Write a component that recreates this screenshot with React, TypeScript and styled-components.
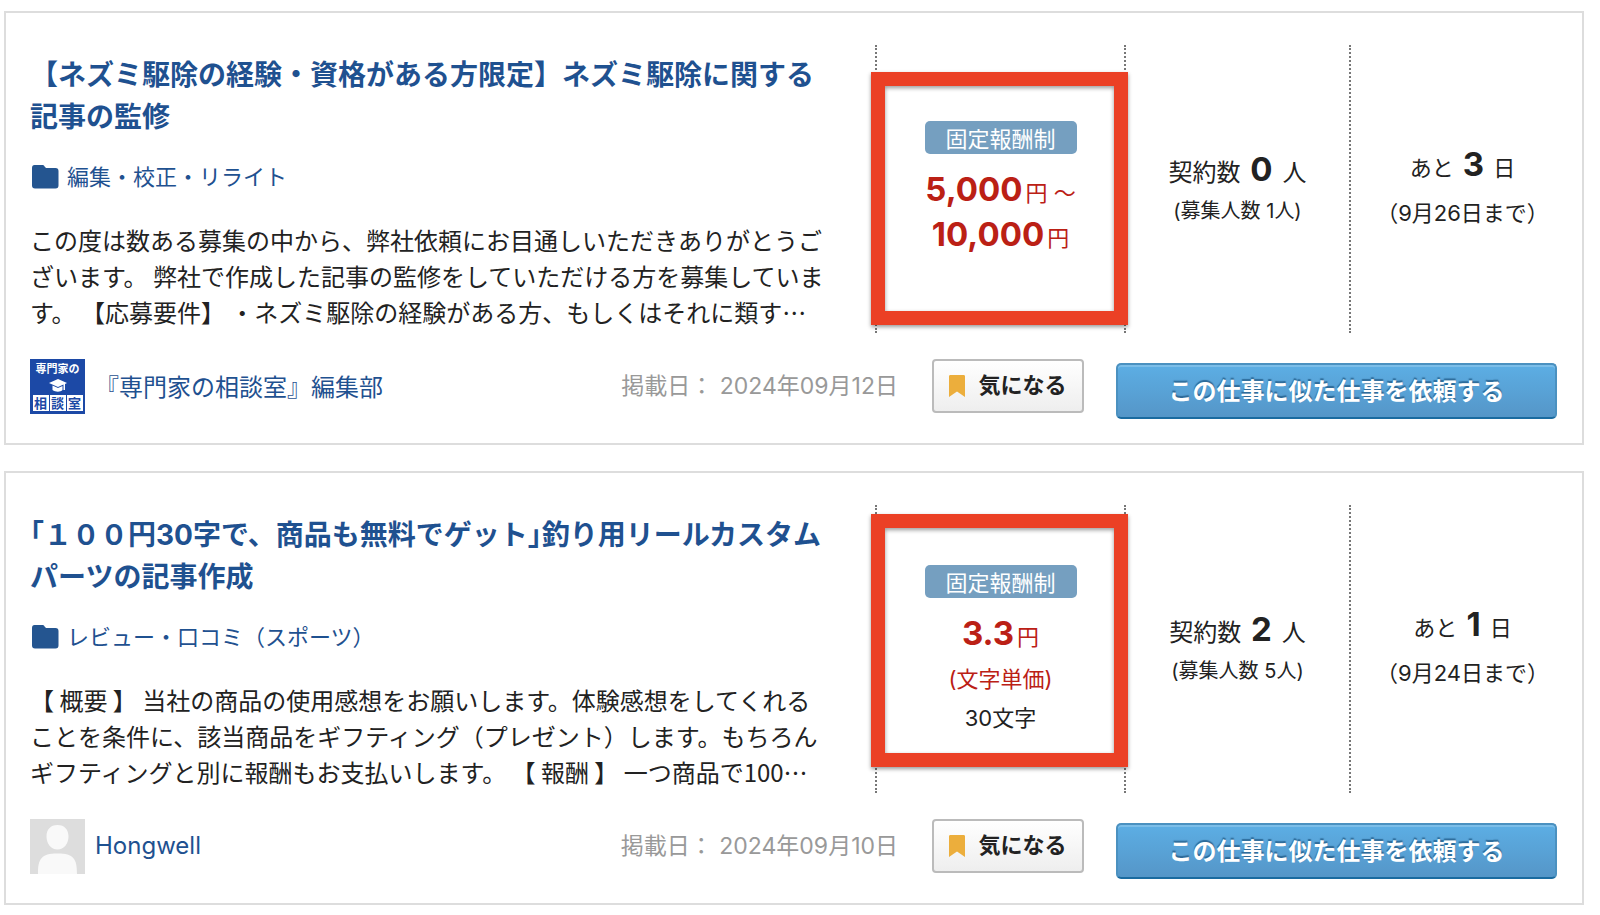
import React from "react";
import styled, { createGlobalStyle } from "styled-components";

const GlobalStyle = createGlobalStyle`
  * { box-sizing: border-box; }
  body {
    margin: 0;
    background: #fff;
    color: #222;
    font-family: Inter, "Noto Sans CJK JP", sans-serif;
    font-size: 24px;
  }
  a { color: #1f5190; text-decoration: none; }
  h2, p { margin: 0; }
`;

const List = styled.main`
  display: flex;
  flex-direction: column;
  gap: 26px;
  padding: 11px 16px 10px 4px;
`;

const Card = styled.article`
  border: 2px solid #ddd;
  padding: 32px 0 24px 24px;
`;

const Body = styled.div`
  display: grid;
  grid-template-columns: minmax(0, 1fr) 249px 225px 225px;
  padding-right: 8px;
`;

const Summary = styled.div`
  padding: 9px 0 3px;
`;

const Title = styled.h2`
  font-size: 28px;
  line-height: 42px;
  font-weight: 700;
  white-space: pre-line;
`;

const Category = styled.a`
  display: flex;
  align-items: center;
  gap: 8px;
  margin-top: 20px;
  padding-left: 2px;
  font-size: 22px;
  line-height: 38px;
`;

const Description = styled.p`
  margin-top: 26px;
  font-family: "Noto Sans CJK JP", sans-serif;
  line-height: 36px;
  white-space: pre-line;
`;

const Column = styled.div`
  position: relative;
  display: flex;
  flex-direction: column;
  justify-content: center;
  align-items: center;
  padding-top: 4px;
  text-align: center;
  border-left: 2px dotted #777;
`;

const Badge = styled.span`
  width: 152px;
  margin-bottom: 17px;
  padding-top: 3px;
  border-radius: 5px;
  background: #759fc0;
  color: #fff;
  font-size: 22px;
  line-height: 30px;
`;

const Price = styled.p`
  color: #bb2015;
  font-size: 22px;
  line-height: 45px;
`;

const Amount = styled.strong`
  margin-right: 3px;
  font-size: 33px;
  line-height: 33px;
  font-weight: 700;
`;

const Count = styled(Amount)`
  margin: 0 3px;
`;

const Note = styled.p<{ $accent?: boolean }>`
  color: ${(p) => (p.$accent ? "#bb2015" : "#222")};
  font-size: 22px;
  line-height: 39px;
`;

const Highlight = styled.div<{ $top: number }>`
  position: absolute;
  top: ${(p) => p.$top}px;
  left: -6px;
  width: 257px;
  height: 253px;
  border: 14px solid #eb4025;
  box-shadow: 0 2px 4px rgba(0, 0, 0, 0.4), inset 0 2px 4px rgba(0, 0, 0, 0.4);
  pointer-events: none;
  z-index: 1;
`;

const Contracts = styled.p`
  line-height: 40px;
`;

const Capacity = styled.p`
  font-size: 20px;
  line-height: 36px;
`;

const Deadline = styled.p`
  font-size: 22px;
  line-height: 45px;
`;

const Footer = styled.div`
  display: flex;
  align-items: flex-start;
  margin-top: 26px;
  padding-right: 25px;
`;

const Client = styled.a`
  display: flex;
  align-items: center;
  gap: 10px;
  height: 55px;
`;

const ClientName = styled.span`
  padding-bottom: 3px;
`;

const Posted = styled.span`
  margin: 0 34px 0 auto;
  color: #999;
  font-size: 23px;
  line-height: 54px;
`;

const KeepButton = styled.button`
  display: flex;
  align-items: center;
  justify-content: center;
  gap: 13px;
  width: 152px;
  height: 54px;
  margin-right: 32px;
  padding: 0;
  border: 2px solid #bbb;
  border-radius: 4px;
  background: linear-gradient(#fff, #eee);
  color: #222;
  font: inherit;
  font-size: 22px;
  font-weight: 700;
`;

const KeepLabel = styled.span`
  padding-bottom: 6px;
`;

const OrderButton = styled.button`
  width: 441px;
  height: 56px;
  margin-top: 4px;
  padding: 0 0 3px;
  border: 2px solid #4b91c0;
  border-bottom-color: #1a6ba0;
  border-radius: 5px;
  background: linear-gradient(#5caee4, #5596c8);
  box-shadow: inset 0 2px 0 rgba(255, 255, 255, 0.2);
  color: #fff;
  font: inherit;
  font-size: 24px;
  font-weight: 700;
  text-shadow: 0 -2px 1px rgba(0, 50, 90, 0.5);
`;

const Logo = styled.span`
  display: flex;
  flex-direction: column;
  align-items: center;
  justify-content: space-between;
  width: 55px;
  height: 55px;
  padding: 3px 2px;
  background: #1c49a6;
  color: #fff;
  font-size: 11px;
  line-height: 14px;
  font-weight: 700;
`;

const LogoTiles = styled.span`
  display: flex;
  gap: 1px;
`;

const LogoTile = styled.span`
  width: 16px;
  background: #fff;
  color: #1c49a6;
  font-size: 13px;
  line-height: 16px;
  text-align: center;
`;

const FolderIcon = () => (
  <svg width="27" height="24" viewBox="0 0 27 24" fill="#245590" aria-hidden="true">
    <path d="M2.500 0H10c1.400 0 2 .5 2.600 1.400L14 3h9.500C25.600 3 26.500 4 26.500 6v14.500c0 2-.9 3-3 3h-20.500c-2 0-3-1-3-3V3C0 1 .8 0 2.500 0z" />
  </svg>
);

const BookmarkIcon = () => (
  <svg width="16" height="22" viewBox="0 0 16 22" fill="#ecae3c" aria-hidden="true">
    <path d="M1.500 0h13c1 0 1.500.5 1.500 1.500V22l-8-5.500L0 22V1.500C0 .5.5 0 1.500 0z" />
  </svg>
);

const PersonAvatar = () => (
  <svg width="55" height="55" viewBox="0 0 55 55" aria-hidden="true">
    <path fill="#ddd" d="M0 0h55v55H0z" />
    <path
      fill="#f9f9f9"
      d="M27.500 6c7 0 11 4.500 11 11.500S34 30.500 27.500 30.500 16.500 24.500 16.500 17.500 20.500 6 27.500 6zM8 55c0-15 3-20.500 19.500-20.500S47 40 47 55z"
    />
  </svg>
);

const OfficeLogo = () => (
  <Logo>
    <span>専門家の</span>
    <svg width="18" height="13" viewBox="0 0 18 13" fill="#fff" aria-hidden="true">
      <path d="M9 0l9 4-2 .9V11h-1.500V5.600L9 8 0 4z" />
      <path d="M3.500 6.500L9 9l4.500-2v4c-2 2.300-7 2.300-10 0z" />
    </svg>
    <LogoTiles>
      <LogoTile>相</LogoTile>
      <LogoTile>談</LogoTile>
      <LogoTile>室</LogoTile>
    </LogoTiles>
  </Logo>
);

type Job = {
  title: string;
  category: string;
  description: string;
  highlightTop: number;
  price: React.ReactNode;
  contracts: number;
  capacity: number;
  daysLeft: number;
  deadline: string;
  avatar: React.ReactNode;
  client: string;
  posted: string;
};

const jobs: Job[] = [
  {
    title: "【ネズミ駆除の経験・資格がある方限定】ネズミ駆除に関する\n記事の監修",
    category: "編集・校正・リライト",
    description:
      "この度は数ある募集の中から、弊社依頼にお目通しいただきありがとうご\nざいます。 弊社で作成した記事の監修をしていただける方を募集していま\nす。 【応募要件】 ・ネズミ駆除の経験がある方、もしくはそれに類す…",
    highlightTop: 27,
    price: (
      <>
        <Price>
          <Amount>5,000</Amount>円 〜
        </Price>
        <Price>
          <Amount>10,000</Amount>円
        </Price>
      </>
    ),
    contracts: 0,
    capacity: 1,
    daysLeft: 3,
    deadline: "9月26日",
    avatar: <OfficeLogo />,
    client: "『専門家の相談室』編集部",
    posted: "2024年09月12日",
  },
  {
    title: "｢１００円30字で、商品も無料でゲット｣釣り用リールカスタム\nパーツの記事作成",
    category: "レビュー・口コミ（スポーツ）",
    description:
      "【 概要 】 当社の商品の使用感想をお願いします。体験感想をしてくれる\nことを条件に、該当商品をギフティング（プレゼント）します。もちろん\nギフティングと別に報酬もお支払いします。 【 報酬 】 一つ商品で100…",
    highlightTop: 9,
    price: (
      <>
        <Price>
          <Amount>3.3</Amount>円
        </Price>
        <Note $accent>(文字単価)</Note>
        <Note>30文字</Note>
      </>
    ),
    contracts: 2,
    capacity: 5,
    daysLeft: 1,
    deadline: "9月24日",
    avatar: <PersonAvatar />,
    client: "Hongwell",
    posted: "2024年09月10日",
  },
];

const JobCard = ({ job }: { job: Job }) => (
  <Card>
    <Body>
      <Summary>
        <Title>
          <a href="#job">{job.title}</a>
        </Title>
        <Category href="#category">
          <FolderIcon />
          {job.category}
        </Category>
        <Description>{job.description}</Description>
      </Summary>
      <Column>
        <Badge>固定報酬制</Badge>
        {job.price}
        <Highlight $top={job.highlightTop} />
      </Column>
      <Column>
        <Contracts>
          契約数 <Count>{job.contracts}</Count> 人
        </Contracts>
        <Capacity>(募集人数 {job.capacity}人)</Capacity>
      </Column>
      <Column>
        <Deadline>
          あと <Count>{job.daysLeft}</Count> 日
        </Deadline>
        <Deadline>（{job.deadline}まで）</Deadline>
      </Column>
    </Body>
    <Footer>
      <Client href="#client">
        {job.avatar}
        <ClientName>{job.client}</ClientName>
      </Client>
      <Posted>掲載日： {job.posted}</Posted>
      <KeepButton type="button">
        <BookmarkIcon />
        <KeepLabel>気になる</KeepLabel>
      </KeepButton>
      <OrderButton type="button">この仕事に似た仕事を依頼する</OrderButton>
    </Footer>
  </Card>
);

export default function App() {
  return (
    <>
      <GlobalStyle />
      <List lang="ja">
        {jobs.map((job) => (
          <JobCard key={job.client} job={job} />
        ))}
      </List>
    </>
  );
}
